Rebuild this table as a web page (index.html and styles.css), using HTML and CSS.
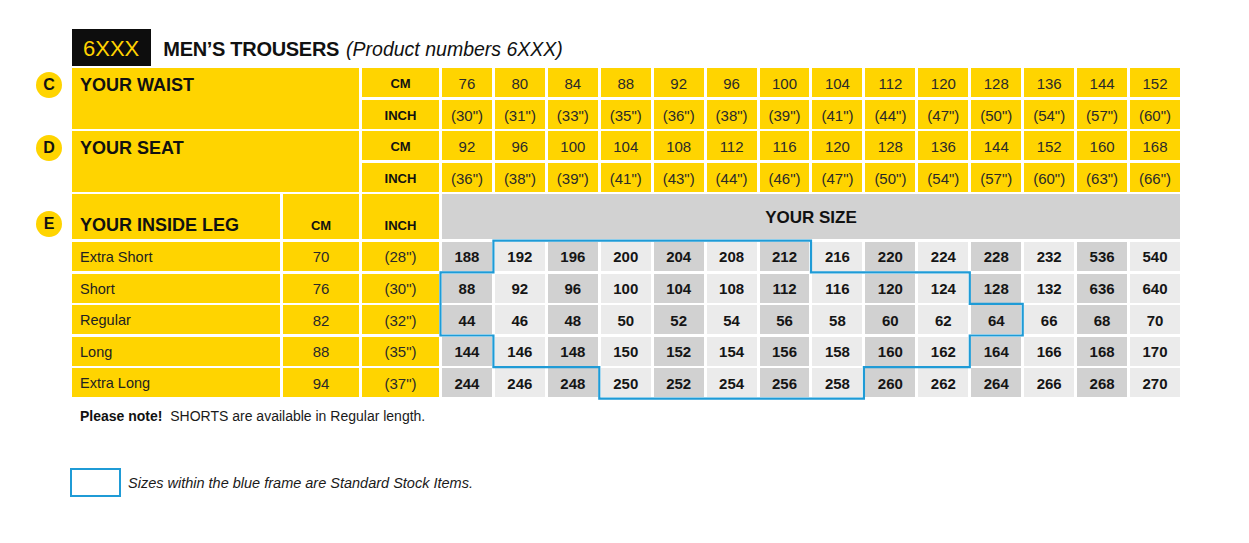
FILE: index.html
```html
<!DOCTYPE html>
<html lang="en">
<head>
<meta charset="utf-8">
<title>Men's Trousers size chart</title>
<link rel="stylesheet" href="styles.css">
</head>
<body>
<div class="page">
  <div class="title-row">
    <div class="code-box">6XXX</div>
    <div class="title">MEN’S TROUSERS</div>
    <div class="subtitle">(Product numbers 6XXX)</div>
  </div>

  <div class="chart">
    <!-- Waist -->
    <div class="label span2"><span class="badge">C</span>YOUR WAIST</div>
    <div class="unit">CM</div>
    <div class="y">76</div><div class="y">80</div><div class="y">84</div><div class="y">88</div><div class="y">92</div><div class="y">96</div><div class="y">100</div><div class="y">104</div><div class="y">112</div><div class="y">120</div><div class="y">128</div><div class="y">136</div><div class="y">144</div><div class="y">152</div>
    <div class="unit">INCH</div>
    <div class="y">(30")</div><div class="y">(31")</div><div class="y">(33")</div><div class="y">(35")</div><div class="y">(36")</div><div class="y">(38")</div><div class="y">(39")</div><div class="y">(41")</div><div class="y">(44")</div><div class="y">(47")</div><div class="y">(50")</div><div class="y">(54")</div><div class="y">(57")</div><div class="y">(60")</div>

    <!-- Seat -->
    <div class="label span2"><span class="badge">D</span>YOUR SEAT</div>
    <div class="unit">CM</div>
    <div class="y">92</div><div class="y">96</div><div class="y">100</div><div class="y">104</div><div class="y">108</div><div class="y">112</div><div class="y">116</div><div class="y">120</div><div class="y">128</div><div class="y">136</div><div class="y">144</div><div class="y">152</div><div class="y">160</div><div class="y">168</div>
    <div class="unit">INCH</div>
    <div class="y">(36")</div><div class="y">(38")</div><div class="y">(39")</div><div class="y">(41")</div><div class="y">(43")</div><div class="y">(44")</div><div class="y">(46")</div><div class="y">(47")</div><div class="y">(50")</div><div class="y">(54")</div><div class="y">(57")</div><div class="y">(60")</div><div class="y">(63")</div><div class="y">(66")</div>

    <!-- Inside leg header -->
    <div class="leg-label"><span class="badge badge-e">E</span>YOUR INSIDE LEG</div>
    <div class="leg-unit">CM</div>
    <div class="leg-unit">INCH</div>
    <div class="size-head">YOUR SIZE</div>

    <!-- Extra Short -->
    <div class="name">Extra Short</div><div class="ym">70</div><div class="ym">(28")</div>
    <div class="d">188</div><div class="l">192</div><div class="d">196</div><div class="l">200</div><div class="d">204</div><div class="l">208</div><div class="d">212</div><div class="l">216</div><div class="d">220</div><div class="l">224</div><div class="d">228</div><div class="l">232</div><div class="d">536</div><div class="l">540</div>
    <!-- Short -->
    <div class="name">Short</div><div class="ym">76</div><div class="ym">(30")</div>
    <div class="d">88</div><div class="l">92</div><div class="d">96</div><div class="l">100</div><div class="d">104</div><div class="l">108</div><div class="d">112</div><div class="l">116</div><div class="d">120</div><div class="l">124</div><div class="d">128</div><div class="l">132</div><div class="d">636</div><div class="l">640</div>
    <!-- Regular -->
    <div class="name">Regular</div><div class="ym">82</div><div class="ym">(32")</div>
    <div class="d">44</div><div class="l">46</div><div class="d">48</div><div class="l">50</div><div class="d">52</div><div class="l">54</div><div class="d">56</div><div class="l">58</div><div class="d">60</div><div class="l">62</div><div class="d">64</div><div class="l">66</div><div class="d">68</div><div class="l">70</div>
    <!-- Long -->
    <div class="name">Long</div><div class="ym">88</div><div class="ym">(35")</div>
    <div class="d">144</div><div class="l">146</div><div class="d">148</div><div class="l">150</div><div class="d">152</div><div class="l">154</div><div class="d">156</div><div class="l">158</div><div class="d">160</div><div class="l">162</div><div class="d">164</div><div class="l">166</div><div class="d">168</div><div class="l">170</div>
    <!-- Extra Long -->
    <div class="name">Extra Long</div><div class="ym">94</div><div class="ym">(37")</div>
    <div class="d">244</div><div class="l">246</div><div class="d">248</div><div class="l">250</div><div class="d">252</div><div class="l">254</div><div class="d">256</div><div class="l">258</div><div class="d">260</div><div class="l">262</div><div class="d">264</div><div class="l">266</div><div class="d">268</div><div class="l">270</div>

    <!-- Stock frame overlay -->
    <div class="frame">
      <svg viewBox="0 0 738 155.4" preserveAspectRatio="none" aria-hidden="true">
        <path d="M51.43 -1.3 H369.01 V30.3 H527.8 V61.9 H580.73 V93.5 H527.8 V125.1 H421.94 V156.7 H157.29 V125.1 H51.43 V93.5 H-1.5 V30.3 H51.43 Z" fill="none" stroke="#1f9bd6" stroke-width="2.2"/>
      </svg>
    </div>
  </div>

  <p class="note"><b>Please note!</b>&nbsp; SHORTS are available in Regular length.</p>

  <div class="legend">
    <span class="legend-box"></span>
    <span class="legend-text">Sizes within the blue frame are Standard Stock Items.</span>
  </div>
</div>
</body>
</html>
```

FILE: styles.css
```css
html, body {
  margin: 0;
  padding: 0;
  background: #ffffff;
}

body {
  font-family: "Liberation Sans", Arial, sans-serif;
  color: #1a1a1a;
}

.page {
  padding: 29px 0 0 72px;
}

/* Title */
.title-row {
  display: flex;
  align-items: baseline;
  height: 37px;
  margin-bottom: 2px;
}

.code-box {
  background: #0d0d0d;
  color: #ffd200;
  font-size: 22px;
  line-height: 34px;
  height: 34px;
  padding: 3px 12px 0 11px;
}

.title {
  margin-left: 12px;
  font-size: 20px;
  font-weight: 700;
  letter-spacing: -0.3px;
  color: #111;
}

.subtitle {
  margin-left: 7px;
  font-size: 19.5px;
  font-style: italic;
  color: #111;
}

/* Chart grid */
.chart {
  position: relative;
  display: grid;
  width: 1108px;
  grid-template-columns: 208px 76px 77px repeat(14, 1fr);
  grid-template-rows: 29px 29px 29px 29px 45px repeat(5, 29px);
  column-gap: 3px;
  row-gap: 2.6px;
}

.chart > div {
  display: flex;
  align-items: center;
  justify-content: center;
}

.label {
  position: relative;
  grid-column: 1 / 3;
  background: #ffd400;
  font-size: 18px;
  font-weight: 700;
  line-height: 22px;
  color: #111;
}

.chart > .label {
  align-items: flex-start;
  justify-content: flex-start;
  padding: 6px 8px 0;
}

.span2 {
  grid-row: span 2;
}

.badge {
  position: absolute;
  left: -36px;
  top: 4px;
  width: 26px;
  height: 26px;
  border-radius: 50%;
  background: #ffd400;
  color: #111;
  font-size: 16px;
  font-weight: 700;
  line-height: 26px;
  text-align: center;
}

.chart > .unit {
  grid-column: 3;
  background: #ffd400;
  padding-top: 2px;
  font-size: 13px;
  font-weight: 700;
  color: #111;
}

.chart > .y {
  background: #ffd400;
  padding-top: 2px;
  font-size: 15px;
  color: #2a2a2a;
}

/* Inside leg header */
.chart > .leg-label {
  position: relative;
  background: #ffd400;
  justify-content: flex-start;
  align-items: flex-end;
  padding: 0 8px 3px;
  font-size: 18px;
  font-weight: 700;
  line-height: 22px;
  color: #111;
}

.badge-e {
  top: 17px;
}

.chart > .leg-unit {
  background: #ffd400;
  align-items: flex-end;
  padding-bottom: 5px;
  font-size: 13px;
  font-weight: 700;
  line-height: 16px;
  color: #111;
}

.chart > .size-head {
  grid-column: 4 / -1;
  background: #d2d2d2;
  padding-top: 3px;
  font-size: 17px;
  font-weight: 700;
  color: #111;
}

/* Data rows */
.chart > .name {
  background: #ffd400;
  justify-content: flex-start;
  padding: 1px 0 0 8px;
  font-size: 14.5px;
  color: #222;
}

.chart > .ym {
  background: #ffd400;
  padding-top: 1px;
  font-size: 15px;
  color: #2a2a2a;
}

.chart > .d,
.chart > .l {
  padding-top: 1px;
  font-size: 15px;
  font-weight: 700;
  color: #151515;
}

.d {
  background: #d1d1d1;
}

.l {
  background: #ebebeb;
}

.chart > .frame {
  position: absolute;
  grid-column: 4 / -1;
  grid-row: 6 / 11;
  top: 0;
  left: 0;
  right: 0;
  bottom: 0;
  display: block;
  pointer-events: none;
}

.frame svg {
  position: absolute;
  left: 0;
  top: 0;
  width: 100%;
  height: 100%;
  overflow: visible;
}

/* Note & legend */
.note {
  margin: 11px 0 0;
  padding-left: 8px;
  font-size: 14px;
  line-height: 17px;
  color: #1a1a1a;
}

.note b {
  font-weight: 700;
  color: #111;
}

.legend {
  display: flex;
  align-items: center;
  margin: 43px 0 0 -2px;
}

.legend-box {
  box-sizing: border-box;
  width: 51px;
  height: 29px;
  border: 2px solid #1f9bd6;
}

.legend-text {
  margin-left: 7px;
  font-size: 14.5px;
  font-style: italic;
  color: #1a1a1a;
}
```
